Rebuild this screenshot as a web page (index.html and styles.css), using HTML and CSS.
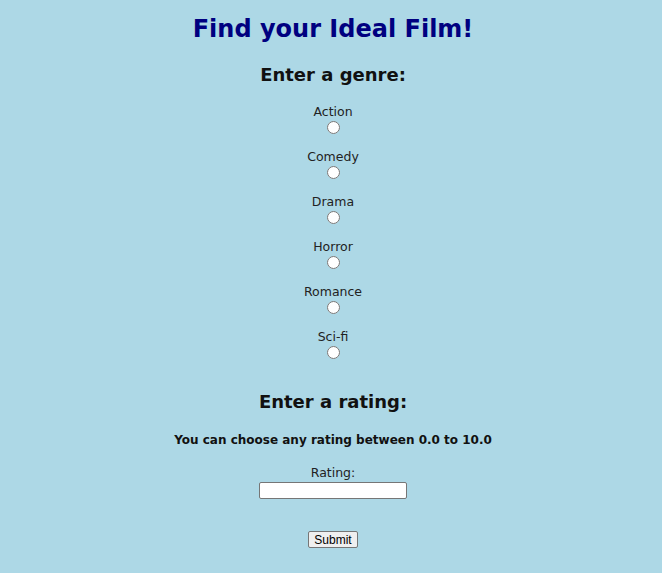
FILE: index.html
```html
<!DOCTYPE html>
<html lang="en">
<head>
  <meta charset="UTF-8">
  <meta name="viewport" content="width=device-width, initial-scale=1.0">
  <title>Find your Ideal Film</title>
  <link rel="stylesheet" href="styles.css">
</head>
<body>
  <h1>Find your Ideal Film!</h1>
  <form class="film-form" onsubmit="return false">
    <h2>Enter a genre:</h2>
    <div class="genre-list">
      <div class="genre"><label for="action">Action</label><input type="radio" id="action" name="genre" value="action"></div>
      <div class="genre"><label for="comedy">Comedy</label><input type="radio" id="comedy" name="genre" value="comedy"></div>
      <div class="genre"><label for="drama">Drama</label><input type="radio" id="drama" name="genre" value="drama"></div>
      <div class="genre"><label for="horror">Horror</label><input type="radio" id="horror" name="genre" value="horror"></div>
      <div class="genre"><label for="romance">Romance</label><input type="radio" id="romance" name="genre" value="romance"></div>
      <div class="genre"><label for="scifi">Sci-fi</label><input type="radio" id="scifi" name="genre" value="scifi"></div>
    </div>

    <h2 class="rating-title">Enter a rating:</h2>
    <p class="hint">You can choose any rating between 0.0 to 10.0</p>
    <div class="rating">
      <label for="rating">Rating:</label>
      <input type="text" id="rating" name="rating">
    </div>
    <button type="submit" class="submit">Submit</button>
  </form>
</body>
</html>
```

FILE: styles.css
```css
body {
  font-family: 'DejaVu Sans', Verdana, sans-serif;
  background: #add8e6;
  margin: 0;
  padding: 8px 6px 8px 10px;
  color: #222;
  text-align: center;
}
h1 {
  font-size: 24px;
  line-height: 30px;
  color: #000080;
  margin: 6px 0 20px;
}
h2 {
  font-size: 18px;
  line-height: 22px;
  color: #111;
  margin: 0 0 18px;
}
.film-form {
  display: flex;
  flex-direction: column;
  align-items: center;
}
.genre-list {
  display: flex;
  flex-direction: column;
  gap: 15px;
}
.genre {
  display: flex;
  flex-direction: column;
  align-items: center;
  font-size: 12.5px;
  line-height: 16px;
}
.genre input {
  margin: 1px 0 0;
  width: 13px;
  height: 13px;
}
.rating-title {
  margin-top: 32px;
  margin-bottom: 20px;
}
.hint {
  font-size: 12px;
  line-height: 15px;
  font-weight: bold;
  color: #111;
  margin: 0 0 17px;
}
.rating {
  display: flex;
  flex-direction: column;
  align-items: center;
  font-size: 12.5px;
  line-height: 16px;
}
.rating input {
  box-sizing: border-box;
  width: 148px;
  height: 17px;
  margin: 1px 0 0;
  padding: 1px 2px;
  border: 1px solid #767676;
  border-radius: 2px;
  background: white;
}
.submit {
  box-sizing: border-box;
  height: 17px;
  margin-top: 32px;
  font-family: 'Liberation Sans', Arial, sans-serif;
  font-size: 12px;
  padding: 0 5px;
  border: 1px solid #767676;
  border-radius: 2px;
  background: #efefef;
  color: #000;
}
```
